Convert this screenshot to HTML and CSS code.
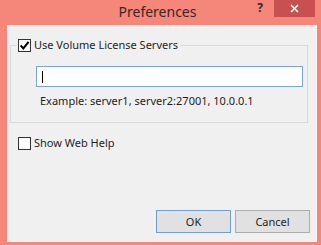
FILE: index.html
```html
<!DOCTYPE html>
<html>
<head>
<meta charset="utf-8">
<link rel="stylesheet" href="styles.css">
</head>
<body>
<div class="window">
  <div class="titlebar">
    <div class="tb-spacer"></div>
    <div class="title">Preferences</div>
    <div class="tb-controls">
      <span class="help">?</span>
      <span class="close">
        <svg width="9" height="9" viewBox="0 0 9 9"><path d="M1 1 L8 8 M8 1 L1 8" stroke="#fff" stroke-width="1.6"/></svg>
      </span>
    </div>
  </div>
  <div class="client">
    <fieldset class="group">
      <legend class="legend">
        <span class="check"><svg width="11" height="11" viewBox="0 0 11 11"><path d="M1.6 5.4 L4.3 8.4 L9.6 1.8" fill="none" stroke="#000" stroke-width="2"/></svg></span>
        <span class="label">Use Volume License Servers</span>
      </legend>
      <div class="field"><span class="caret"></span></div>
      <div class="example">Example: server1, server2:27001, 10.0.0.1</div>
    </fieldset>
    <div class="row">
      <span class="check"></span>
      <span class="label">Show Web Help</span>
    </div>
    <div class="buttons">
      <div class="btn default">OK</div>
      <div class="btn">Cancel</div>
    </div>
  </div>
</div>
</body>
</html>
```
FILE: styles.css
```css
html, body {
  margin: 0;
  padding: 0;
  background: #f4877a;
}
.window {
  width: 321px;
  height: 245px;
  box-sizing: border-box;
  background: #f4877a;
  padding: 0 4px 3px 7px;
  display: flex;
  flex-direction: column;
  font-family: "Noto Sans", "Open Sans", sans-serif;
}
.titlebar {
  height: 25px;
  display: grid;
  grid-template-columns: 1fr auto 1fr;
  margin: 0 -4px 0 -7px;
  padding-right: 6px;
}
.title {
  font-size: 14px;
  color: #3a2624;
  line-height: 24px;
}
.tb-controls {
  display: flex;
  justify-content: flex-end;
  align-items: flex-start;
}
.help {
  font-weight: bold;
  font-size: 12px;
  color: #3a2624;
  line-height: 16px;
  margin-right: 11px;
}
.close {
  width: 41px;
  height: 17px;
  background: #c75050;
  display: flex;
  align-items: center;
  justify-content: center;
}
.client {
  flex: 1;
  background: #f0f0f0;
  border: 1px solid #f8f4f4;
  display: flex;
  flex-direction: column;
  font-size: 11px;
  color: #1e1e1e;
}
.group {
  margin: 11px 8px 0 2px;
  padding: 0 4px 0 0;
  border: 1px solid #d9d9d9;
  height: 86px;
  box-sizing: border-box;
  min-width: 0;
}
.legend {
  display: flex;
  align-items: center;
  padding: 0 2px 0 1px;
  margin-left: 6px;
  height: 16px;
}
.check {
  width: 11px;
  height: 11px;
  border: 1px solid #333;
  background: #fff;
  display: inline-flex;
  align-items: center;
  justify-content: center;
  margin-right: 3px;
  flex: none;
}
.label {
  line-height: 16px;
}
.field {
  margin: 13px 0 0 25px;
  height: 19px;
  border: 1px solid #7aa5d6;
  background: #fff;
  display: flex;
  align-items: center;
}
.caret {
  width: 1px;
  height: 12px;
  background: #000;
  margin-left: 5px;
}
.example {
  margin: 6px 0 0 29px;
  line-height: 16px;
}
.row {
  display: flex;
  align-items: center;
  margin: 12px 0 0 10px;
  height: 16px;
}
.buttons {
  margin-top: auto;
  margin-bottom: 8px;
  display: flex;
  justify-content: flex-end;
  gap: 4px;
  padding-right: 6px;
}
.btn {
  width: 73px;
  height: 21px;
  border: 1px solid #adadad;
  background: #e1e1e1;
  display: flex;
  align-items: center;
  justify-content: center;
  line-height: 16px;
}
.btn.default {
  border-color: #6d9fd4;
}
```
